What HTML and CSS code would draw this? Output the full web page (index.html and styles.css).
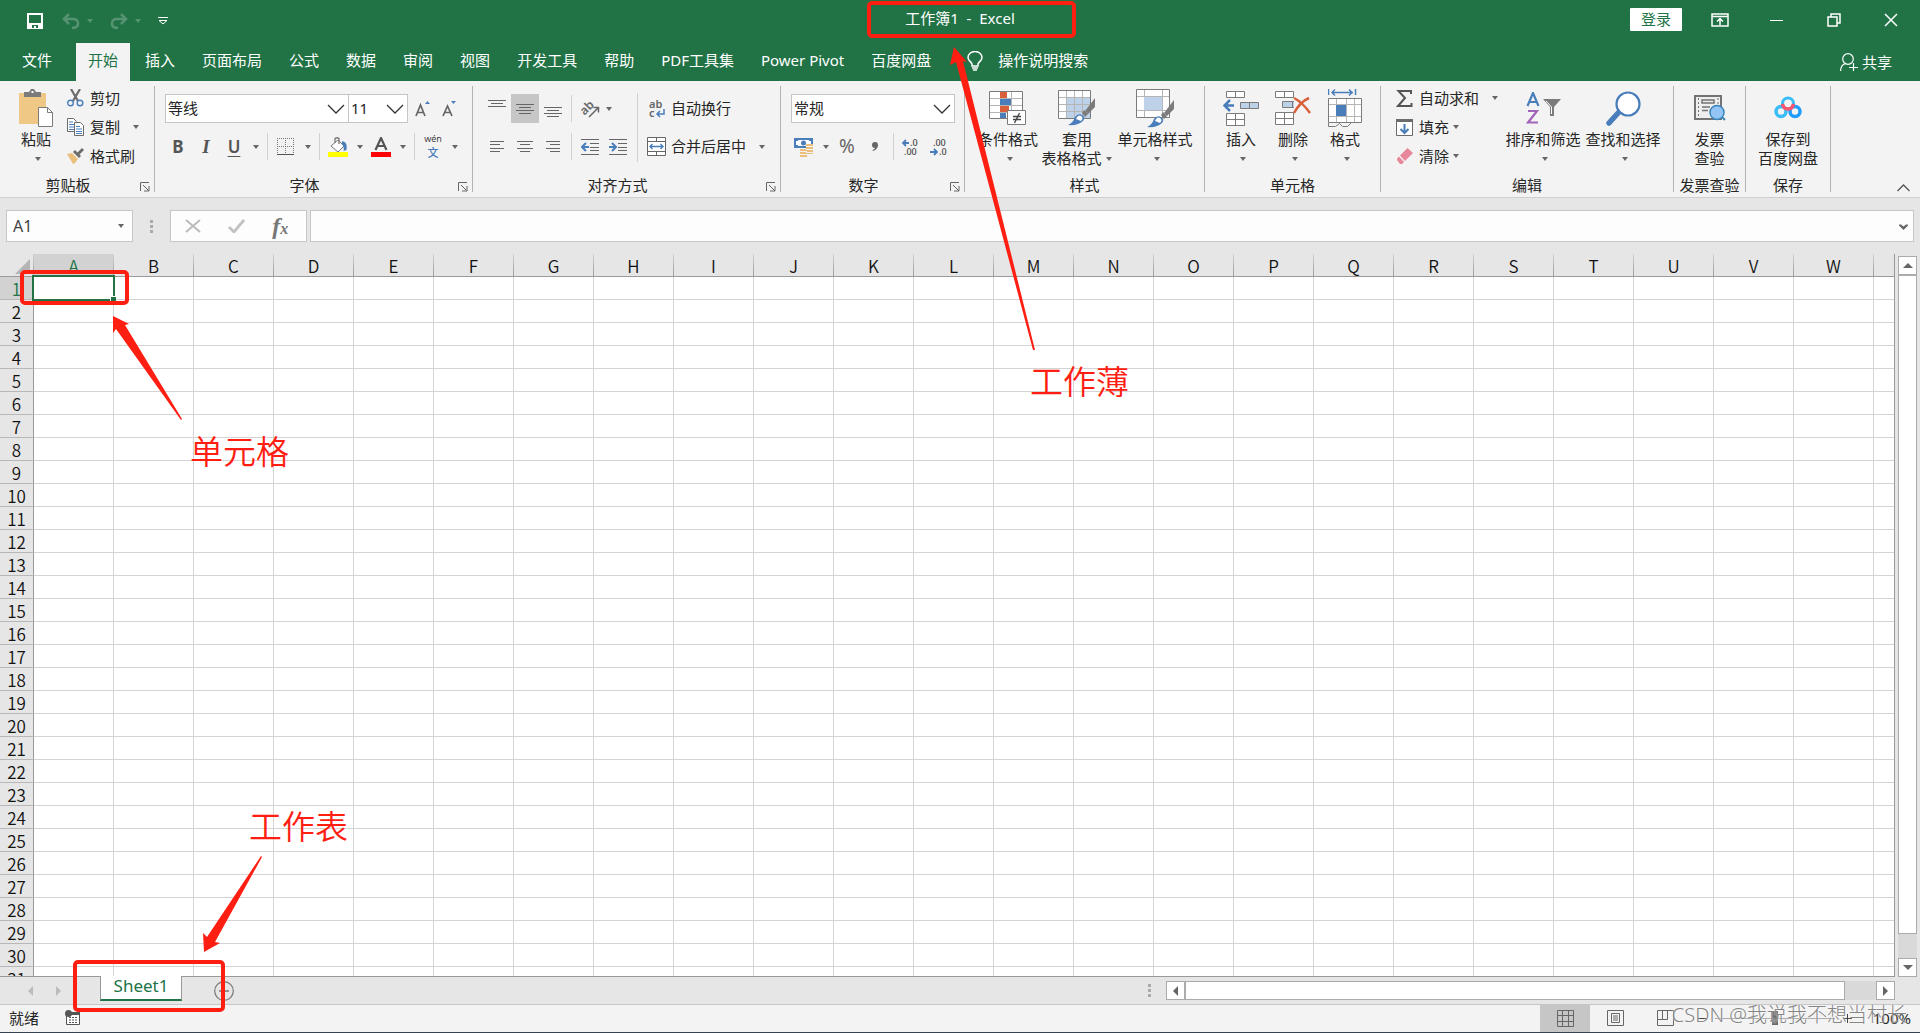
FILE: index.html
```html
<!DOCTYPE html>
<html lang="zh-CN">
<head>
<meta charset="utf-8">
<title>工作簿1 - Excel</title>
<link rel="stylesheet" href="styles.css">
</head>
<body>
<header class="titlebar">
  <div class="quick">
    <button class="q-save" aria-label="保存"><svg width="16" height="16" viewBox="0 0 16 16"><path d="M1 1h14v14H1z" fill="none" stroke="#fff" stroke-width="2"/><path d="M2 10h12v5H2z" fill="#fff"/><path d="M5 12h6v3H9v-2H7v2H5z" fill="#217346"/></svg></button>
    <button class="q-undo" aria-label="撤消"><svg width="18" height="16" viewBox="0 0 18 16"><path d="M7 1L2 6l5 5M2 6h9q5 0 5 4.500t-6 4.500" fill="none" stroke="#569373" stroke-width="2.500"/></svg></button>
    <button class="drop dim" aria-label="撤消选项"></button>
    <button class="q-redo" aria-label="恢复"><svg width="18" height="16" viewBox="0 0 18 16"><path d="M11 1l5 5-5 5M16 6H7Q2 6 2 10.500T8 15" fill="none" stroke="#569373" stroke-width="2.500"/></svg></button>
    <button class="drop dim" aria-label="恢复选项"></button>
    <button class="q-more" aria-label="自定义快速访问工具栏"><svg width="10" height="8" viewBox="0 0 10 8"><path d="M0 .5h10M1 3.500h8L5 7z" fill="none" stroke="#fff"/></svg></button>
  </div>
  <h1 class="doc-title">工作簿1&nbsp; -&nbsp; Excel<span class="mark mark-title"></span></h1>
  <div class="window-tools">
    <button class="login">登录</button>
    <button class="win" aria-label="功能区显示选项"><svg width="18" height="14" viewBox="0 0 18 14"><path d="M1 1h16v12H1zM1 3.500h16" fill="none" stroke="#fff" stroke-width="1.500"/><path d="M9 12V6M6 8.500l3-3 3 3" fill="none" stroke="#fff" stroke-width="1.500"/></svg></button>
    <button class="win" aria-label="最小化"><svg width="14" height="14" viewBox="0 0 14 14"><path d="M0 7.500h13" stroke="#fff"/></svg></button>
    <button class="win" aria-label="还原"><svg width="14" height="14" viewBox="0 0 14 14"><path d="M1 4h9v9H1zM4 4V1h9v9h-3" fill="none" stroke="#fff" stroke-width="1.500"/></svg></button>
    <button class="win" aria-label="关闭"><svg width="14" height="14" viewBox="0 0 14 14"><path d="M1 1l12 12M13 1L1 13" stroke="#fff" stroke-width="1.500"/></svg></button>
  </div>
</header>

<nav class="tabs">
  <a href="#" class="file">文件</a><a href="#" class="active">开始</a><a href="#">插入</a><a href="#">页面布局</a><a href="#">公式</a><a href="#">数据</a><a href="#">审阅</a><a href="#">视图</a><a href="#">开发工具</a><a href="#">帮助</a><a href="#">PDF工具集</a><a href="#">Power Pivot</a><a href="#">百度网盘</a>
  <button class="tell-me"><svg width="16" height="20" viewBox="0 0 16 20"><path d="M5 15v-2C4.500 11 1 9.500 1 6.500a7 6 0 0 1 14 0c0 3-3.500 4.500-4 6.500v2z" fill="none" stroke="#fff" stroke-width="1.500"/><path d="M5 17h6M6 19h4" stroke="#fff" stroke-width="1.500"/></svg>操作说明搜索</button>
  <button class="share"><svg width="18" height="18" viewBox="0 0 18 18"><circle cx="8" cy="6" r="5.300" fill="none" stroke="#fff" stroke-width="1.200"/><path d="M.6 18q0-6 5-7.500M13.500 10v9M9 14.500h9" fill="none" stroke="#fff" stroke-width="1.200"/></svg>共享</button>
</nav>

<main class="ribbon">
  <section class="group g-clip">
    <div class="body">
      <button class="big paste"><span class="pic"><svg width="34" height="38" viewBox="0 0 34 38"><path d="M0 4h27v31H0z" fill="#eec884"/><path d="M5 3h5l2-3h3l2 3h5v5H5z" fill="#7b7b7b"/><path d="M12.500 2h2v2h-2z" fill="#fff"/><path d="M19.500 18.500h9l5 5v14h-14z" fill="#fff" stroke="#7b7b7b"/><path d="M28.500 18.500v5h5" fill="none" stroke="#7b7b7b"/></svg></span><span>粘贴</span><i class="caret"></i></button>
      <div class="stack">
        <button class="cmd"><svg width="17" height="18" viewBox="0 0 17 18"><path d="M4 0l7 12M13 0L6 12" stroke="#6b6b6b" stroke-width="2.200"/><circle cx="3.500" cy="14" r="2.800" fill="none" stroke="#4a7ebb" stroke-width="1.400"/><circle cx="13" cy="14" r="2.800" fill="none" stroke="#4a7ebb" stroke-width="1.400"/></svg>剪切</button>
        <button class="cmd wide-drop"><svg width="17" height="18" viewBox="0 0 17 18"><path d="M.5.5h6l3 3v10h-9z" fill="#fff" stroke="#6b6b6b"/><path d="M2 4h4M2 6.500h5M2 9h5M2 11.500h5" stroke="#4a7ebb"/><path d="M7.500 4.500h6l3 3v10h-9z" fill="#fff" stroke="#6b6b6b"/><path d="M9 8.500h4M9 11h6M9 13.500h6M9 15.500h6" stroke="#4a7ebb"/></svg>复制<i class="caret"></i></button>
        <button class="cmd"><svg width="17" height="16" viewBox="0 0 17 16"><path d="M0 6l5-1 6 6-3 4-2 1z" fill="#eabf7c"/><path d="M6 4l2-2 6 6-2 2z" fill="#6b6b6b"/><path d="M10 5l5-5 2 2-5 5z" fill="#6b6b6b"/></svg>格式刷</button>
      </div>
    </div>
    <div class="foot"><span>剪贴板</span><button class="launch" aria-label="剪贴板设置"><svg width="10" height="10" viewBox="0 0 10 10"><path d="M.5 9V.5H9M3 3l5.500 5.500M9 4v5H4" fill="none" stroke="#666"/></svg></button></div>
  </section>

  <section class="group g-font">
    <div class="body lines">
      <div class="line">
        <select class="combo font-name" aria-label="字体"><option>等线</option></select><select class="combo font-size" aria-label="字号"><option>11</option></select>
        <button class="ico grow" aria-label="增大字号"><svg width="16" height="18" viewBox="0 0 16 18"><path d="M11 4l2.500-3L16 4z" fill="#4a7ebb"/><path d="M2 16L6.500 5 11 16M3.500 12.500h6" fill="none" stroke="#666" stroke-width="1.700"/></svg></button>
        <button class="ico" aria-label="减小字号"><svg width="16" height="18" viewBox="0 0 16 18"><path d="M10 1h5l-2.500 3z" fill="#4a7ebb"/><path d="M2 16L6.500 6 11 16M3.500 12.500h6" fill="none" stroke="#666" stroke-width="1.700"/></svg></button>
      </div>
      <div class="line">
        <button class="ico glyph bold">B</button><button class="ico glyph ital">I</button><button class="ico glyph under">U</button><button class="drop" aria-label="下划线选项"></button>
        <i class="sep"></i>
        <button class="ico" aria-label="边框"><svg width="18" height="18" viewBox="0 0 18 18"><path d="M.5 0v16M8.500 0v16M16.500 0v16M0 .5h17M0 8.500h17" stroke="#777" stroke-dasharray="1 1"/><path d="M0 16.500h17" stroke="#555"/></svg></button><button class="drop" aria-label="边框选项"></button>
        <i class="sep"></i>
        <button class="ico" aria-label="填充颜色"><svg width="20" height="20" viewBox="0 0 20 20"><path d="M3 9l7-6 6 6-6 6z" fill="#fff" stroke="#777"/><path d="M7 6V1.500Q9 0 11 1.500V7" fill="none" stroke="#777" stroke-width="1.300"/><path d="M14 4q6 1 4.500 9L15.500 14q1-4-1.500-7z" fill="#4a7ebb"/><path d="M0 15h20v5H0z" fill="#ff0"/></svg></button><button class="drop" aria-label="填充颜色选项"></button>
        <button class="ico" aria-label="字体颜色"><svg width="20" height="20" viewBox="0 0 20 20"><path d="M4.500 13L10 1l5.500 12M6.500 9h7" fill="none" stroke="#555" stroke-width="2.200"/><path d="M0 15h20v5H0z" fill="red"/></svg></button><button class="drop" aria-label="字体颜色选项"></button>
        <i class="sep"></i>
        <button class="ico wen"><span>wén</span><b>文</b></button><button class="drop" aria-label="拼音选项"></button>
      </div>
    </div>
    <div class="foot"><span>字体</span><button class="launch" aria-label="字体设置"><svg width="10" height="10" viewBox="0 0 10 10"><path d="M.5 9V.5H9M3 3l5.500 5.500M9 4v5H4" fill="none" stroke="#666"/></svg></button></div>
  </section>

  <section class="group g-align">
    <div class="body">
      <div class="lines">
        <div class="line">
          <button class="ico" aria-label="顶端对齐"><svg width="18" height="18" viewBox="0 0 18 18"><path d="M0 .5h18M3 3.500h12M0 6.500h18" stroke="#666"/></svg></button>
          <button class="ico on" aria-label="垂直居中"><svg width="18" height="18" viewBox="0 0 18 18"><path d="M0 4.500h18M3 7.500h12M0 10.500h18M3 13.500h12" stroke="#666"/></svg></button>
          <button class="ico" aria-label="底端对齐"><svg width="18" height="18" viewBox="0 0 18 18"><path d="M0 7.500h18M3 10.500h12M0 13.500h18M3 16.500h12" stroke="#666"/></svg></button>
          <i class="sep"></i>
          <button class="ico" aria-label="方向"><svg width="26" height="26" viewBox="-4 -4 26 26"><text x="-1" y="11" class="ab" transform="rotate(-45 7 8)">ab</text><path d="M8 17L17 8M12.500 7.500H17.500V12.500" fill="none" stroke="#666" stroke-width="1.500"/></svg></button><button class="drop near" aria-label="方向选项"></button>
        </div>
        <div class="line">
          <button class="ico" aria-label="左对齐"><svg width="14" height="12" viewBox="0 0 14 12"><path d="M0 .5h14M0 3.500h10M0 7.500h14M0 10.500h10" stroke="#666"/></svg></button>
          <button class="ico" aria-label="居中"><svg width="16" height="12" viewBox="0 0 16 12"><path d="M0 .5h16M3 3.500h10M0 7.500h16M3 10.500h10" stroke="#666"/></svg></button>
          <button class="ico" aria-label="右对齐"><svg width="14" height="12" viewBox="0 0 14 12"><path d="M0 .5h14M4 3.500h10M0 7.500h14M4 10.500h10" stroke="#666"/></svg></button>
          <i class="sep"></i>
          <button class="ico" aria-label="减少缩进"><svg width="18" height="16" viewBox="0 0 18 16"><path d="M0 .5h18M9 4.500h9M9 8.500h9M9 11.500h9M0 15.500h18" stroke="#666"/><path d="M8 8H1M5 4L1 8l4 4" fill="none" stroke="#4a7ebb" stroke-width="2"/></svg></button>
          <button class="ico" aria-label="增加缩进"><svg width="18" height="16" viewBox="0 0 18 16"><path d="M0 .5h18M9 4.500h9M9 8.500h9M9 11.500h9M0 15.500h18" stroke="#666"/><path d="M0 8h7M3 4l4 4-4 4" fill="none" stroke="#4a7ebb" stroke-width="2"/></svg></button>
        </div>
      </div>
      <i class="sep tall"></i>
      <div class="lines merge">
        <div class="line"><button class="cmd"><svg width="19" height="28" viewBox="0 -5 19 28"><text x="2" y="8" class="abc">ab</text><text x="2" y="17" class="abc">c</text><path d="M17 9v5h-6M13 11l-3 3 3 3" fill="none" stroke="#4a7ebb" stroke-width="1.500"/></svg>自动换行</button></div>
        <div class="line"><button class="cmd wide-drop"><svg width="19" height="19" viewBox="0 0 19 19"><path d="M.5.5h18v18H.5zM.5 4.500h18M.5 14.500h18M9.500 0v4M9.500 15v4" fill="#fff" stroke="#666"/><path d="M3 9.500h13M5.500 7L3 9.500 5.500 12M13.500 7L16 9.500 13.500 12" fill="none" stroke="#4a7ebb" stroke-width="1.400"/></svg>合并后居中<i class="caret"></i></button></div>
      </div>
    </div>
    <div class="foot"><span>对齐方式</span><button class="launch" aria-label="对齐设置"><svg width="10" height="10" viewBox="0 0 10 10"><path d="M.5 9V.5H9M3 3l5.500 5.500M9 4v5H4" fill="none" stroke="#666"/></svg></button></div>
  </section>

  <section class="group g-num">
    <div class="body lines">
      <div class="line"><select class="combo num-format" aria-label="数字格式"><option>常规</option></select></div>
      <div class="line">
        <button class="ico" aria-label="会计数字格式"><svg width="20" height="20" viewBox="0 0 20 20"><path d="M0 1h19v10H0z" fill="#4a7ebb"/><path d="M4 3h11v1h2v4h-2v1H4V8H2V4h2z" fill="#fff"/><circle cx="9.500" cy="6" r="2.500" fill="#4a7ebb"/><path d="M12 7h7v10h-7z" fill="#eabf7c"/><path d="M6 12h7v8H6z" fill="#eabf7c"/><path d="M12 9.500h7M12 12.500h7M6 14.500h7M6 17.500h7M12 15.500h7" stroke="#f3f3f3"/></svg></button><button class="drop" aria-label="会计格式选项"></button>
        <button class="ico glyph percent">%</button>
        <button class="ico" aria-label="千位分隔样式"><svg width="6" height="10" viewBox="0 0 6 10"><path d="M0 3a3 3 0 0 1 6 0q0 4-5 6l-.5-1Q3 7 3 6 0 6 0 3z" fill="#666"/></svg></button>
        <i class="sep"></i>
        <button class="ico" aria-label="增加小数位数"><svg width="22" height="26" viewBox="-1 -4 22 26"><path d="M7 5H2M4 2L1 5l3 3" fill="none" stroke="#4a7ebb" stroke-width="1.800"/><text x="8" y="8" class="dec">.0</text><text x="2" y="17" class="dec">.00</text></svg></button>
        <button class="ico" aria-label="减少小数位数"><svg width="22" height="26" viewBox="-1 -4 22 26"><path d="M0 14h6M4 11l3 3-3 3" fill="none" stroke="#4a7ebb" stroke-width="1.800"/><text x="3" y="8" class="dec">.00</text><text x="9" y="17" class="dec">.0</text></svg></button>
      </div>
    </div>
    <div class="foot"><span>数字</span><button class="launch" aria-label="数字设置"><svg width="10" height="10" viewBox="0 0 10 10"><path d="M.5 9V.5H9M3 3l5.500 5.500M9 4v5H4" fill="none" stroke="#666"/></svg></button></div>
  </section>

  <section class="group g-style">
    <div class="body">
      <button class="big b-cond"><span class="pic"><svg width="38" height="36" viewBox="0 0 38 36"><path d="M.5 1.500h33v27H.5z" fill="#fff" stroke="#7b7b7b"/><path d="M11.500 2v26M22.500 2v26M1 8.500h32M1 15.500h32M1 22.500h32" stroke="#b5b5b5"/><path d="M11 2h7v6h-7zM11 16h9v6h-9z" fill="#d9603b"/><path d="M11 9h11v6H11zM11 23h6v5h-6z" fill="#4a7ebb"/><path d="M18.500 20.500h18v14h-18z" fill="#fff" stroke="#7b7b7b"/><path d="M24 26.500h8M24 29.500h8M30.500 23l-5 10" stroke="#444" stroke-width="1.300"/></svg></span><span>条件格式</span><i class="caret"></i></button>
      <button class="big b-table"><span class="pic"><svg width="38" height="36" viewBox="0 0 38 36"><path d="M.5.5h32v28H.5z" fill="#fff" stroke="#7b7b7b"/><path d="M9 8h23v20H9z" fill="#bdd1e8"/><path d="M8.500 1v27M16.500 1v27M24.500 1v27M1 7.500h31M1 14.500h31M1 21.500h31" stroke="#b5b5b5"/><path d="M37 8v9l-7 7-3-3z" fill="#7b7b7b"/><path d="M26 20l4 4-3 3-3-4z" fill="#7b7b7b"/><path d="M10 35q5-2 7-8 3-4 7-2t1 6q-5 5-15 4z" fill="#4a7ebb"/><path d="M18 29q2-5 5-3t0 5z" fill="#fff"/></svg></span><span>套用</span><span class="with-caret">表格格式<i class="caret"></i></span></button>
      <button class="big b-cell"><span class="pic"><svg width="38" height="39" viewBox="0 0 38 39"><path d="M.5.500h33v28H.5z" fill="#fff" stroke="#7b7b7b"/><path d="M8.500 1v27M26.500 1v27M1 7.500h32M1 21.500h32" stroke="#b5b5b5"/><path d="M8 8h18v13H8z" fill="#bdd1e8"/><path d="M38 11v9l-7 7-3-3z" fill="#7b7b7b"/><path d="M27 23l4 4-3 3-3-4z" fill="#7b7b7b"/><path d="M11 38q5-2 7-8 3-4 7-2t1 6q-5 5-15 4z" fill="#4a7ebb"/><path d="M19 32q2-5 5-3t0 5z" fill="#fff"/></svg></span><span>单元格样式</span><i class="caret"></i></button>
    </div>
    <div class="foot"><span>样式</span></div>
  </section>

  <section class="group g-cells">
    <div class="body">
      <button class="big b-52"><span class="pic"><svg width="36" height="36" viewBox="0 0 36 36"><path d="M3.500 1.500h18v6h-18zM12.500 1.500v6M3.500 23.500h18v12h-18zM3.500 29.500h18M12.500 23.500v12" fill="#fff" stroke="#7b7b7b"/><path d="M17.500 12.500h18v6h-18zM26.500 12.500v6" fill="#bdd1e8" stroke="#7b7b7b"/><path d="M11 15.500H2M7 10l-5.500 5.500L7 21" fill="none" stroke="#4a7ebb" stroke-width="2.500"/></svg></span><span>插入</span><i class="caret"></i></button>
      <button class="big b-52"><span class="pic"><svg width="36" height="36" viewBox="0 0 36 36"><path d="M.5 1.500h18v6H.5zM9.500 1.500v6M.5 22.500h18v12H.5zM.5 28.500h18M9.500 22.500v12" fill="#fff" stroke="#7b7b7b"/><path d="M19 11.500H7.500v6H19M17.500 11.500v6" fill="#bdd1e8" stroke="#7b7b7b"/><path d="M19 8q8 4 16 15M34 8q-9 4-15 15" fill="none" stroke="#d9603b" stroke-width="2.500"/></svg></span><span>删除</span><i class="caret"></i></button>
      <button class="big b-52"><span class="pic"><svg width="34" height="38" viewBox="0 0 34 38"><path d="M.5 0v6M27.500 0v6M4 3.500h21M7 .5l-3 3 3 3M21 .5l3 3-3 3" fill="none" stroke="#4a7ebb" stroke-width="1.500"/><path d="M.5 9.500h33v24H.5z" fill="#fff" stroke="#7b7b7b"/><path d="M8.500 10v23M18.500 10v23M26.500 10v23M1 15.500h32M1 27.500h32" stroke="#b5b5b5"/><path d="M8 16h10v11H8z" fill="#4a7ebb"/><path d="M.5 34v3.500h7l4-3 3 3h5l4-4" fill="none" stroke="#7b7b7b"/></svg></span><span>格式</span><i class="caret"></i></button>
    </div>
    <div class="foot"><span>单元格</span></div>
  </section>

  <section class="group g-edit">
    <div class="body">
      <div class="stack">
        <button class="cmd wide-drop"><svg width="17" height="17" viewBox="0 0 17 17"><path d="M15 4V1H2.500L9 8l-7 8h13.500v-3" fill="none" stroke="#555" stroke-width="2"/></svg>自动求和<i class="caret"></i></button>
        <button class="cmd"><svg width="17" height="17" viewBox="0 0 17 17"><path d="M.5.5h16v16H.5z" fill="#fff" stroke="#6b6b6b"/><path d="M0 0h17v3H0z" fill="#6b6b6b"/><path d="M8.500 5v9M4.500 10l4 4 4-4" fill="none" stroke="#4a7ebb" stroke-width="2"/></svg>填充<i class="caret"></i></button>
        <button class="cmd"><svg width="17" height="16" viewBox="0 0 17 16"><path d="M11.500 0L17 5 9 13 4 7.500z" fill="#e8879b"/><path d="M3 8.500L8 14l-2 2H4L1 12v-1.500z" fill="#e8879b"/></svg>清除<i class="caret"></i></button>
      </div>
      <button class="big b-80"><span class="pic"><svg width="35" height="32" viewBox="0 0 35 32"><path d="M1.500 14L7 1l5.500 13M3 10h8" fill="none" stroke="#4a7ebb" stroke-width="2.200"/><path d="M2 19h9L2 30.500h10" fill="none" stroke="#a064b8" stroke-width="2.200"/><path d="M17 7h18l-7 8v9h-4v-9z" fill="#7b7b7b"/><path d="M20 9l5.500 6v7" fill="none" stroke="#fff"/></svg></span><span>排序和筛选</span><i class="caret"></i></button>
      <button class="big b-80"><span class="pic"><svg width="35" height="35" viewBox="0 0 35 35"><path d="M13 21L3 32" stroke="#4a7ebb" stroke-width="5.500" stroke-linecap="round"/><circle cx="22" cy="13" r="11.500" fill="#fff" stroke="#4a7ebb" stroke-width="2.200"/></svg></span><span>查找和选择</span><i class="caret"></i></button>
    </div>
    <div class="foot"><span>编辑</span></div>
  </section>

  <section class="group g-inv">
    <div class="body center">
      <button class="big"><span class="pic"><svg width="32" height="26" viewBox="0 0 32 26"><path d="M1 1h26v23H1z" fill="#eee" stroke="#737373" stroke-width="2"/><path d="M4.500 3v20M24 3v8" stroke="#737373" stroke-dasharray="2 2"/><path d="M8 5h12v3H8zM8 12h8M8 15.500h6" fill="none" stroke="#737373" stroke-width="1.500"/><path d="M27 21l4 4" stroke="#3a86b8" stroke-width="2"/><circle cx="23" cy="17.500" r="7" fill="#92c5f5" stroke="#3a86b8" stroke-width="1.500"/></svg></span><span>发票</span><span>查验</span></button>
    </div>
    <div class="foot"><span>发票查验</span></div>
  </section>

  <section class="group g-save">
    <div class="body center">
      <button class="big"><span class="pic"><svg width="28" height="24" viewBox="0 0 28 24"><circle cx="14" cy="7.500" r="5.500" fill="none" stroke="#39bdf7" stroke-width="3"/><circle cx="7" cy="15.500" r="5" fill="none" stroke="#39bdf7" stroke-width="3.500"/><circle cx="21" cy="15.500" r="5" fill="none" stroke="#1e9cff" stroke-width="3.500"/><path d="M8.500 8q1 5 5.500 5t5.500-5" fill="none" stroke="#fb5570" stroke-width="3.500"/></svg></span><span>保存到</span><span>百度网盘</span></button>
    </div>
    <div class="foot"><span>保存</span></div>
  </section>
  <button class="collapse" aria-label="折叠功能区"><svg width="13" height="8" viewBox="0 0 13 8"><path d="M.5 7l6-6 6 6" fill="none" stroke="#555" stroke-width="1.300"/></svg></button>
</main>

<div class="formula">
  <div class="namebox"><input type="text" value="A1" aria-label="名称框"><button class="drop" aria-label="名称列表"></button></div>
  <svg class="grip" width="3" height="13" viewBox="0 0 3 13"><path d="M0 0h3v3H0zM0 5h3v3H0zM0 10h3v3H0z" fill="#aaa"/></svg>
  <div class="fx">
    <button aria-label="取消"><svg width="16" height="14" viewBox="0 0 16 14"><path d="M1 1l14 12M15 1L1 13" stroke="#bbb" stroke-width="2"/></svg></button>
    <button aria-label="输入"><svg width="17" height="14" viewBox="0 0 17 14"><path d="M1 8l5 5L16 1" fill="none" stroke="#c2c2c2" stroke-width="2.800"/></svg></button>
    <button aria-label="插入函数" class="fx-sign">f<small>x</small></button>
  </div>
  <div class="entry"><input type="text" aria-label="编辑栏"><button aria-label="展开编辑栏"><svg width="9" height="7" viewBox="0 0 9 7"><path d="M0 1.500h2l2.500 2 2.500-2h2v1L4.500 7 0 2.500z" fill="#666"/></svg></button></div>
</div>

<div class="workspace">
  <div class="sheet"><table id="grid"></table></div>
  <div class="vscroll">
    <button aria-label="向上滚动"><i class="tri up"></i></button>
    <div class="vthumb"></div><div class="vtrack"></div>
    <button aria-label="向下滚动"><i class="tri down"></i></button>
  </div>
</div>

<div class="sheetbar">
  <div class="sheetnav"><i class="tri left"></i><i class="tri right"></i></div>
  <a href="#" class="sheet-tab">Sheet1</a>
  <button class="add" aria-label="新工作表"><svg width="20" height="20" viewBox="0 0 20 20"><circle cx="10" cy="10" r="9.300" fill="none" stroke="#777" stroke-width="1.200"/><path d="M5 10h10M10 5v10" stroke="#777" stroke-width="1.500"/></svg></button>
  <svg class="grip bar-grip" width="3" height="13" viewBox="0 0 3 13"><path d="M0 0h3v3H0zM0 5h3v3H0zM0 10h3v3H0z" fill="#aaa"/></svg>
  <div class="hscroll">
    <button aria-label="向左滚动"><i class="tri left"></i></button>
    <div class="hthumb"></div><div class="htrack"></div>
    <button aria-label="向右滚动"><i class="tri right"></i></button>
  </div>
  <span class="mark mark-sheet"></span>
</div>

<footer class="status">
  <span>就绪</span>
  <button class="macro" aria-label="录制宏"><svg width="16" height="16" viewBox="0 0 16 16"><path d="M1.500 3.500h13v11h-13z" fill="#fff" stroke="#555"/><path d="M6 2h9v3H6z" fill="#555"/><path d="M4 7.500h9M4 10h9M4 12.500h9" stroke="#555" stroke-dasharray="2 1"/><circle cx="3.500" cy="3.500" r="3.500" fill="#555"/></svg></button>
  <div class="views">
    <button class="on" aria-label="普通"><svg width="17" height="17" viewBox="0 0 17 17"><path d="M.5.5h16v16H.5zM5.500 0v17M11.500 0v17M0 5.500h17M0 11.500h17" fill="none" stroke="#666"/></svg></button>
    <button aria-label="页面布局"><svg width="17" height="16" viewBox="0 0 17 16"><path d="M.5.5h16v15H.5zM4.500 3.500h8v9h-8zM6 6h5M6 8h5M6 10h5" fill="none" stroke="#666"/></svg></button>
    <button aria-label="分页预览"><svg width="17" height="16" viewBox="0 0 17 16"><path d="M.5.5h16v15H.5zM.5 9.500h10v-9M5.500 0v9" fill="none" stroke="#666"/></svg></button>
  </div>
  <button class="zoom-step" aria-label="缩小"><svg width="9" height="9" viewBox="0 0 9 9"><path d="M0 4.500h9" stroke="#444"/></svg></button>
  <input class="zoom" type="range" min="0" max="200" value="100" aria-label="显示比例">
  <button class="zoom-step" aria-label="放大"><svg width="9" height="9" viewBox="0 0 9 9"><path d="M0 4.500h9M4.500 0v9" stroke="#444"/></svg></button>
  <span class="percent-label">100%</span>
  <span class="credit">CSDN @我说我不想当村长</span>
</footer>

<svg class="arrows" aria-hidden="true"><path d="M954 47l13 15-4-1 72 289h-2L956 62l-6 3zM113 316l16 8-4 1 57 94-1 1-65-91-3 4z"/></svg>
<svg class="arrows low" aria-hidden="true" width="80" height="110" viewBox="190 850 80 110"><path d="M204 952l-1-19 4 4 54-81 1 1-47 85 5 1z"/></svg>
<span class="note note-book">工作薄</span>
<span class="note note-cell">单元格</span>
<span class="note note-sheet">工作表</span>
<script src="grid.js"></script>
</body>
</html>
```
FILE: styles.css
```css
* { box-sizing: border-box; }
body {
  margin: 0;
  height: 100vh;
  display: flex;
  flex-direction: column;
  overflow: hidden;
  position: relative;
  background: #e6e6e6;
  color: #262626;
  font: 15px/19px "Noto Sans", "Noto Sans CJK SC", sans-serif;
}
button, input, select { font: inherit; color: inherit; }
button {
  margin: 0;
  padding: 0;
  border: 0;
  background: none;
  display: flex;
  align-items: center;
  justify-content: center;
  white-space: nowrap;
}
a { color: inherit; text-decoration: none; }
svg { display: block; flex: none; }
input { min-width: 0; }

/* title bar */
.titlebar {
  flex: none;
  height: 43px;
  background: #217346;
  color: #fff;
  display: grid;
  grid-template-columns: 1fr auto 1fr;
  align-items: start;
}
.quick { display: flex; align-items: center; height: 42px; padding-left: 27px; }
.q-undo { margin-left: 19px; }
.q-redo { margin-left: 10px; }
.q-more { margin-left: 10px; }
.doc-title { margin: 0; position: relative; font-size: 15px; font-weight: 400; line-height: 36px; }
.window-tools { display: flex; justify-content: flex-end; align-items: center; height: 39px; padding-right: 1px; }
.login { width: 52px; height: 23px; margin-right: 9px; background: #fff; color: #217346; border-radius: 1px; }
.win { width: 57px; height: 38px; }
.mark { position: absolute; border: 4px solid #ff1e12; border-radius: 5px; pointer-events: none; }
.mark-title { left: -38px; right: -61px; top: 1px; height: 37px; }

/* ribbon tabs */
.tabs { flex: none; display: flex; gap: 3px; height: 38px; background: #217346; color: #fff; padding-left: 10px; }
.tabs a { padding: 0 12px; line-height: 34px; white-space: nowrap; }
.tabs .file { margin-right: 9px; }
.tabs .active { background: #f3f3f3; color: #217346; }
.tell-me { gap: 15px; margin-left: 21px; height: 35px; }
.share { gap: 4px; margin-left: auto; margin-right: 28px; }

/* ribbon */
.ribbon { flex: none; display: flex; height: 117px; background: #f3f3f3; border-bottom: 1px solid #cfcfcf; padding-top: 5px; }
.group { flex: none; display: flex; flex-direction: column; height: 106px; border-right: 1px solid #b3b3b3; }
.body { flex: 1; display: flex; align-items: flex-start; }
.body.center { justify-content: center; }
.foot { display: flex; height: 14px; line-height: 14px; align-items: center; }
.foot span { flex: 1; text-align: center; white-space: nowrap; }
.launch { width: 18px; height: 14px; align-items: flex-end; }
.g-clip { width: 155px; }
.g-clip .body { padding-left: 8px; gap: 3px; }
.g-font { width: 318px; }
.g-font .body { padding-left: 9px; }
.g-align { width: 308px; }
.g-align .body { padding-left: 10px; }
.g-num { width: 184px; }
.g-num .body { padding-left: 9px; }
.g-style { width: 240px; }
.g-style .body { padding-left: 9px; }
.g-cells { width: 176px; }
.g-cells .body { padding-left: 10px; }
.g-edit { width: 293px; }
.g-edit .body { padding-left: 15px; }
.g-inv { width: 72px; }
.g-save { width: 85px; }

.big { flex-direction: column; justify-content: flex-start; }
.big > * { height: 19px; }
.big .pic { height: 44px; display: flex; align-items: center; }
.big > .caret { margin-left: 4px; }
.paste { width: 56px; }
.b-cond { width: 68px; }
.b-table { width: 70px; }
.b-cell { width: 86px; }
.b-52 { width: 52px; }
.b-80 { width: 80px; }
.with-caret { display: flex; }
.with-caret .caret { width: 7px; margin-left: 4px; height: 19px; }

.caret, .drop { display: inline-flex; align-items: center; justify-content: center; }
.caret::after, .drop::after {
  content: "";
  border: 3px solid transparent;
  border-top: 4px solid #666;
  border-bottom: 0;
}
.drop { width: 15px; height: 29px; flex: none; }
.near { width: 9px; }
.dim { width: 20px; }
.dim::after { border-top-color: #569373; }

.stack { display: flex; flex-direction: column; gap: 3px; margin-top: -1px; }
.cmd { height: 26px; gap: 6px; justify-content: flex-start; }
.wide-drop .caret { margin-left: 7px; }
.g-edit .stack { width: 107px; }
.g-edit .cmd .caret { margin-left: -2px; }
.g-edit .wide-drop .caret { margin-left: 7px; }

.lines { display: flex; flex-direction: column; gap: 9px; padding-top: 8px; }
.g-align .lines { width: 150px; }
.g-align .merge { width: auto; padding-left: 5px; }
.merge .cmd { height: 29px; gap: 5px; }
.merge .wide-drop .caret { margin-left: 8px; }
.line { display: flex; align-items: center; height: 29px; }
.ico { width: 28px; height: 29px; flex: none; }
.ico.on { background: #c6c6c6; }
.sep { width: 1px; height: 27px; margin: 0 4px; background: #d0d0d0; flex: none; }
.sep.tall { height: 69px; margin-top: 7px; }
.glyph { font-size: 18px; color: #555; }
.bold { font-weight: 700; font-size: 17px; }
.ital { font: italic 700 19px "Liberation Serif", serif; }
.under { font-weight: 600; font-size: 17px; text-decoration: underline; text-underline-offset: 3px; }
.percent { font-size: 19px; color: #666; }
.wen { flex-direction: column; font-size: 9px; line-height: 12px; color: #444; }
.wen b { font-size: 11px; line-height: 16px; font-weight: 500; color: #4a7ebb; }
.ab { font: 600 12px "Noto Sans", sans-serif; fill: #666; }
.abc { font: 600 11px "Noto Sans", sans-serif; fill: #666; }
.dec { font: 500 9px "Noto Sans", sans-serif; fill: #444; }
.combo {
  appearance: none;
  height: 29px;
  margin: 0;
  padding: 0 24px 0 2px;
  border: 1px solid #c6c6c6;
  border-radius: 0;
  background: #fff url("data:image/svg+xml,%3Csvg xmlns='http://www.w3.org/2000/svg' width='18' height='10'%3E%3Cpath d='M1 1l8 8 8-8' fill='none' stroke='%23333' stroke-width='1.300'/%3E%3C/svg%3E") no-repeat right 3px center;
}
.font-name { width: 184px; margin-left: 1px; }
.font-size { width: 59px; border-left: 0; }
.num-format { width: 164px; margin-left: 1px; }
.g-font .line:first-child .ico { width: 27px; }
.collapse { margin: auto 10px 5px auto; }

/* formula bar */
.formula { flex: none; display: flex; align-items: center; padding: 12px 6px; height: 56px; }
.namebox, .fx, .entry { display: flex; height: 32px; border: 1px solid #c6c6c6; background: #fdfdfd; }
.namebox { width: 127px; }
.namebox input, .entry input { flex: 1; border: 0; background: none; padding: 0 6px; color: #444; font-size: 16px; }
.namebox .drop { width: 22px; height: 30px; }
.grip { margin: 0 17px; }
.fx { width: 137px; margin-right: 3px; }
.fx button { flex: 1; }
.fx .fx-sign { font: italic 700 24px/28px "Liberation Serif", serif; color: #777; padding-right: 4px; }
.fx-sign small { font-size: 16px; line-height: 20px; align-self: flex-end; margin-bottom: 2px; }
.entry { flex: 1; }
.entry button { width: 20px; }

/* cells */
.workspace { flex: 1; min-height: 0; display: flex; }
.sheet { flex: 1; min-width: 0; overflow: hidden; border-right: 1px solid #999; border-bottom: 1px solid #999; }
table { width: 100%; table-layout: fixed; border-collapse: separate; border-spacing: 0; background: #fff; }
th, td { padding: 0; height: 23px; }
th {
  background: #e6e6e6;
  color: #111;
  font: 350 17px/20px "Noto Sans CJK SC", sans-serif;
  padding-top: 2px;
}
thead th {
  border-bottom: 1px solid #999;
  border-right: 1px solid;
  border-image: linear-gradient(#d6d6d6, #999) 1;
  width: 80px;
}
thead th:first-child { width: 34px; }
thead th:last-child { width: auto; border-right: 0; }
tbody th { border-right: 1px solid #999; border-bottom: 1px solid #b8b8b8; }
td { border-right: 1px solid #d4d4d4; border-bottom: 1px solid #d4d4d4; }
td:last-child { border-right: 0; }
.picked { background: #d2d2d2; color: #217346; }
.corner-mark { margin-left: 15px; width: 0; border-left: 15px solid transparent; border-bottom: 15px solid #b4b4b4; }
.current { position: relative; }
.cursor { position: absolute; left: -2px; top: -2px; right: -2px; bottom: -2px; border: 2px solid #217346; }
.cursor::after { content: ""; position: absolute; right: -3px; bottom: -2px; width: 5px; height: 4px; background: #217346; border: solid #fff; border-width: 1px 0 0 1px; box-sizing: content-box; }
.mark-cell { left: -14px; top: -7px; width: 109px; height: 35px; }

/* scroll bars */
.vscroll { width: 19px; margin: 2px 3px 0; display: flex; flex-direction: column; background: #d9d9d9; }
.vscroll button, .hscroll button { width: 19px; height: 19px; flex: none; background: #fff; border: 1px solid #ababab; }
.vthumb { flex: 1; background: #fff; border: 1px solid #ababab; }
.vtrack { height: 24px; }
.tri { border: 5px solid transparent; }
.up { border-top: 0; border-bottom-color: #666; }
.down { border-bottom: 0; border-top-color: #666; }
.left { border-left: 0; border-right-color: #666; }
.right { border-right: 0; border-left-color: #666; }

.sheetbar { flex: none; display: flex; height: 28px; padding-right: 25px; border-bottom: 1px solid #c6c6c6; position: relative; }
.sheetnav { display: flex; width: 100px; gap: 23px; padding: 9px 0 0 28px; }
.sheetnav .tri { height: 10px; }
.sheetnav .left { border-right-color: #bbb; }
.sheetnav .right { border-left-color: #bbb; }
.sheet-tab { width: 82px; height: 25px; margin-top: -1px; background: #fff; color: #217346; border: 1px solid #999; border-top: 0; border-bottom: 2px solid #217346; text-align: center; font-size: 17px; line-height: 19px; z-index: 1; }
.add { margin-left: 32px; width: 20px; height: 28px; }
.bar-grip { margin: 7px 15px 0 auto; }
.hscroll { width: calc(38% + 9px); height: 19px; margin-top: 4px; display: flex; background: #d9d9d9; }
.hthumb { flex: 1; background: #fff; border: 1px solid #ababab; }
.htrack { width: 31px; }
.mark-sheet { left: 73px; top: -17px; width: 152px; height: 52px; z-index: 2; }

/* status bar */
.status { flex: none; display: flex; align-items: center; height: 28px; background: #f3f3f3; border-bottom: 1px solid #364250; padding: 0 9px 1px; position: relative; }
.macro { margin-left: 26px; }
.views { display: flex; margin-left: auto; }
.views button { width: 50px; height: 27px; }
.views .on { background: #c6c6c6; }
.zoom-step { width: 9px; height: 26px; margin: 0 8px; }
.zoom { appearance: none; width: 120px; height: 26px; margin: 0; background: linear-gradient(#aaa, #aaa) center / 100% 1px no-repeat; }
.zoom::-webkit-slider-thumb { appearance: none; width: 6px; height: 14px; background: #666; }
.percent-label { width: 39px; margin-left: 12px; text-align: right; }
.credit { position: absolute; right: 13px; top: -4px; color: #858585; font-size: 20px; line-height: 28px; font-weight: 300; text-shadow: 0 0 2px #fff; white-space: nowrap; }

/* teaching notes over the sheet */
.arrows { position: absolute; left: 0; top: 0; width: 100%; height: 100%; fill: #ff1e12; pointer-events: none; }
.low { left: 190px; top: auto; bottom: 73px; width: 80px; height: 110px; }
.note { position: absolute; color: #ff1e12; font: 350 33px/48px "Noto Sans CJK SC", sans-serif; white-space: nowrap; }
.note-book { left: 1030px; top: 356px; }
.note-cell { left: 190px; top: 426px; }
.note-sheet { left: 249px; bottom: 184px; }
```
FILE: grid.js
```js
const columns = [..."ABCDEFGHIJKLMNOPQRSTUVW", ""];
const rowCount = 31;
const head = columns.map((c, i) => `<th scope="col" class="${i === 0 ? "picked" : ""}">${c}</th>`).join("");
let rows = "";
for (let r = 1; r <= rowCount; r++) {
  const cells = columns.map((c, i) =>
    r === 1 && i === 0
      ? '<td class="current"><span class="cursor"></span><span class="mark mark-cell"></span></td>'
      : "<td></td>").join("");
  rows += `<tr><th scope="row" class="${r === 1 ? "picked" : ""}">${r}</th>${cells}</tr>`;
}
document.getElementById("grid").innerHTML =
  `<thead><tr><th><div class="corner-mark"></div></th>${head}</tr></thead><tbody>${rows}</tbody>`;
```
